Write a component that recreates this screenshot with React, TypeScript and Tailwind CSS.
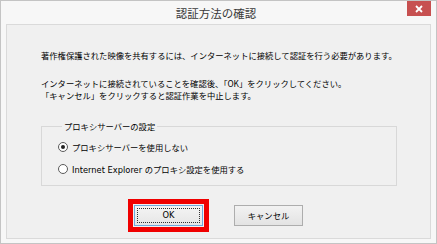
import { useState } from 'react';

const font = { fontFamily: '"Noto Sans CJK JP", "Noto Sans", sans-serif' };
const latin = { fontFamily: '"DejaVu Sans", "Noto Sans CJK JP", sans-serif' };

function Radio({ checked, children, onClick }: { checked: boolean; children: React.ReactNode; onClick: () => void }) {
  return (
    <button onClick={onClick} className="flex items-center gap-[4px] h-[12px] text-left">
      <span className="w-[10px] h-[10px] rounded-full border border-[#5a5a5a] bg-white flex items-center justify-center">
        {checked && <span className="w-[4px] h-[4px] rounded-full bg-[#222]" />}
      </span>
      <span className="text-[8.3px] leading-[12px] text-black">{children}</span>
    </button>
  );
}

export default function App() {
  const [proxy, setProxy] = useState<'none' | 'ie'>('none');

  return (
    <div style={font} className="w-[437px] h-[244px] bg-[#f7f7f7] border border-[#c4c4c4] flex flex-col">
      <div className="grid grid-cols-[1fr_auto_1fr] h-[23px] pr-[5px]">
        <div />
        <div className="text-[11.5px] leading-[23px] text-[#3a3a3a] pt-[1px]">認証方法の確認</div>
        <div className="flex justify-end">
          <button className="w-[24px] h-[15px] bg-[#c75050] flex items-center justify-center">
            <svg width="8" height="8" viewBox="0 0 8 8">
              <path d="M1 1L7 7M7 1L1 7" stroke="#fff" strokeWidth="1.8" />
            </svg>
          </button>
        </div>
      </div>

      <div className="mx-[5px] h-[215px] bg-[#f0f0f0] border border-[#dadada] pl-[34px] pt-[24px] flex flex-col">
        <p className="text-[8.3px] leading-[12px] text-black">
          著作権保護された映像を共有するには、インターネットに接続して認証を行う必要があります。
        </p>
        <p className="mt-[16px] text-[8.3px] leading-[12px] text-black">
          インターネットに接続されていることを確認後、「OK」をクリックしてください。
          <br />
          「キャンセル」をクリックすると認証作業を中止します。
        </p>

        <fieldset className="mt-[19px] w-[356px] border border-[#d8d8d8] pl-[16px] pb-[10px]">
          <legend className="ml-[4px] px-[2px] text-[8.3px] leading-[12px] text-black">プロキシサーバーの設定</legend>
          <div className="flex flex-col gap-[10px] pt-[9px]">
            <Radio checked={proxy === 'none'} onClick={() => setProxy('none')}>
              プロキシサーバーを使用しない
            </Radio>
            <Radio checked={proxy === 'ie'} onClick={() => setProxy('ie')}>
              <span style={latin}>Internet Explorer </span>のプロキシ設定を使用する
            </Radio>
          </div>
        </fieldset>

        <div className="mt-[19px] -ml-[34px] flex justify-center gap-[31px]">
          <button className="w-[69px] h-[21px] p-[2px] bg-gradient-to-b from-[#f4f4f4] to-[#e6e6e6] border border-[#6fa8dc] outline-[5px] outline-solid outline-[#f00000] outline-offset-[1px]">
            <span style={latin} className="w-full h-full border border-dotted border-[#333] flex items-center justify-center text-[8.3px] text-black">
              OK
            </span>
          </button>
          <button className="w-[69px] h-[21px] bg-gradient-to-b from-[#f2f2f2] to-[#e3e3e3] border border-[#adadad] flex items-center justify-center text-[8.3px] text-black">
            キャンセル
          </button>
        </div>
      </div>
    </div>
  );
}
